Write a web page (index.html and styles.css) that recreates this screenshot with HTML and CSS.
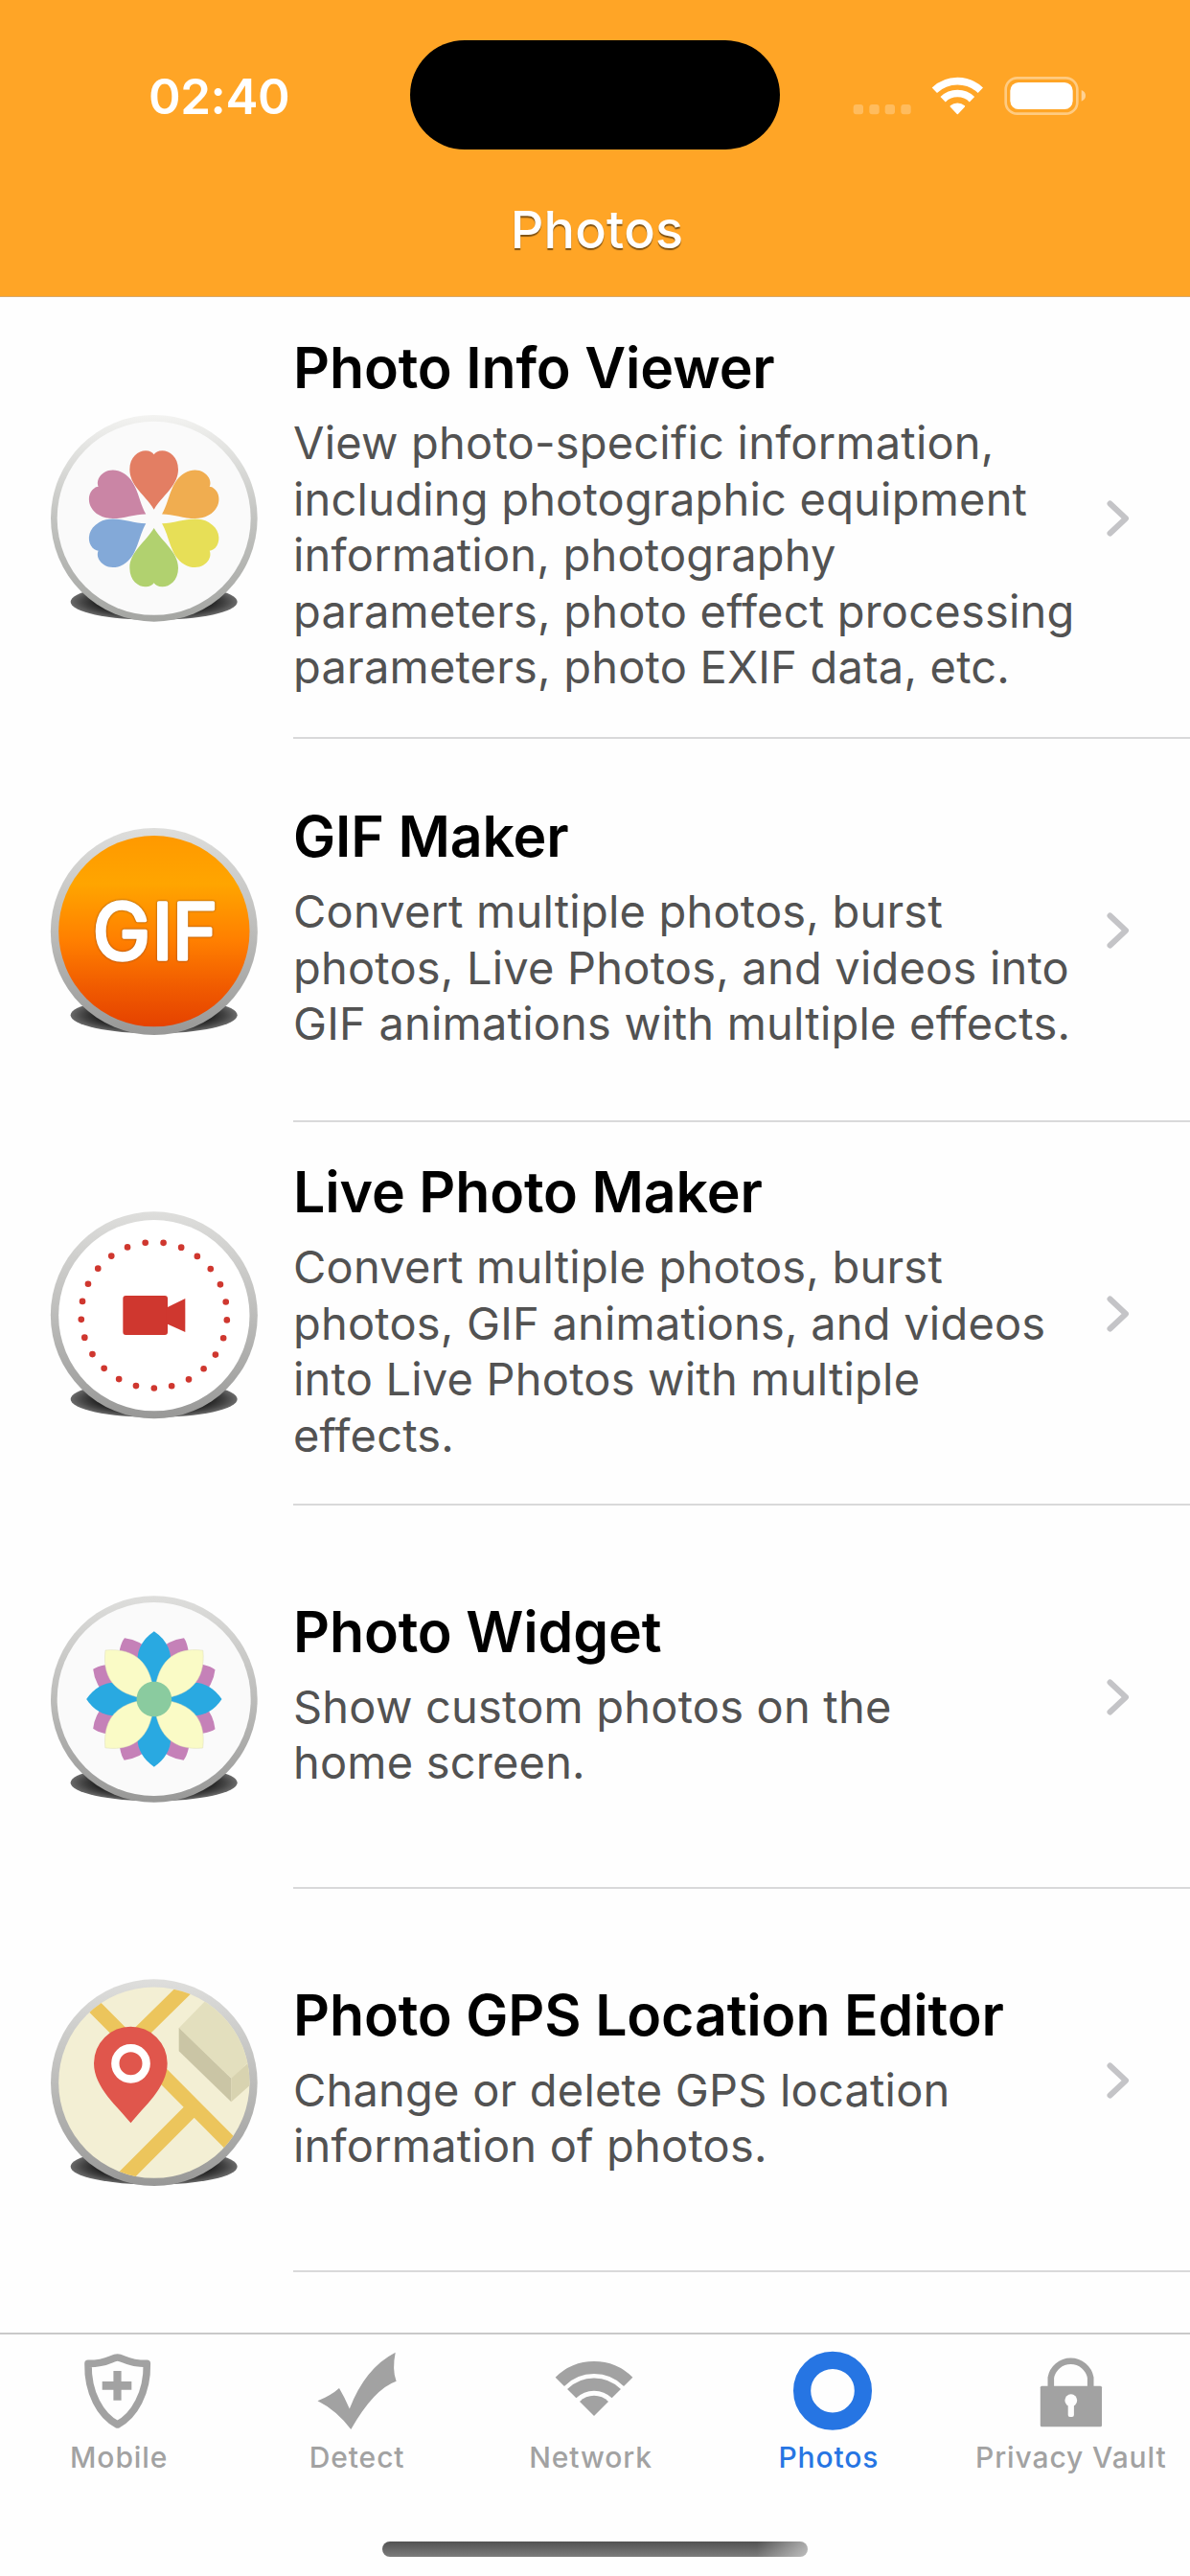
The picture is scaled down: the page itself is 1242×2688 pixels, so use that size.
FILE: index.html
```html
<!DOCTYPE html>
<html lang="en">
<head>
    <meta charset="UTF-8">
    <meta name="viewport" content="width=device-width, initial-scale=1.0">
    <title>Photos</title>
    <link rel="stylesheet" href="styles.css">
</head>
<body>
    <header class="header">
        <div class="status-bar">
            <span class="time">02:40</span>
            <div class="island"></div>
            <svg class="status-icons" viewBox="0 0 900 240" fill="#fff">
                <g opacity="0.26">
                    <rect x="92" y="147" width="31" height="31" rx="9"/>
                    <rect x="142" y="147" width="31" height="31" rx="9"/>
                    <rect x="191" y="147" width="31" height="31" rx="9"/>
                    <rect x="241" y="147" width="31" height="31" rx="9"/>
                </g>
                <path d="M346 103A104 104 0 0 1 490 103M372.500 131A65.500 65.500 0 0 1 463.500 131" fill="none" stroke="#fff" stroke-width="23"/>
                <path d="M418 175L397 153A32 32 0 0 1 439 153Z" stroke="#fff" stroke-width="5" stroke-linejoin="round"/>
                <rect x="569" y="64" width="224" height="112" rx="36" fill="none" stroke="#fff" stroke-width="8" opacity="0.42"/>
                <rect x="583" y="78" width="196" height="84" rx="26"/>
                <path d="M806 102Q819 107 819 119.500Q819 132 806 137Z" opacity="0.5"/>
            </svg>
        </div>
        <h1>Photos</h1>
    </header>

    <main class="list">
        <a class="row row-first">
            <svg class="row-icon" viewBox="0 0 780 780">
                <defs>
                    <linearGradient id="rim" x1="0" y1="0" x2="0" y2="1">
                        <stop offset="0" stop-color="#dededc"/>
                        <stop offset="0.5" stop-color="#bcbcba"/>
                        <stop offset="1" stop-color="#989897"/>
                    </linearGradient>
                    <linearGradient id="rimLight" x1="0" y1="0" x2="0" y2="1">
                        <stop offset="0" stop-color="#f3f3f1"/>
                        <stop offset="0.5" stop-color="#c2c3c0"/>
                        <stop offset="1" stop-color="#a4a5a2"/>
                    </linearGradient>
                    <radialGradient id="shade">
                        <stop offset="0.6" stop-color="#111"/>
                        <stop offset="0.85" stop-color="#444"/>
                        <stop offset="1" stop-color="#6a6a6a"/>
                    </radialGradient>
                    <path id="heart" d="M392 362C368 320 316 288 316 237C316 198 343 178 366 178C379 178 388 184 392 190C396 184 405 178 418 178C441 178 468 198 468 237C468 288 416 320 392 362Z"/>
                </defs>
                <ellipse cx="392" cy="651" rx="261" ry="57" fill="url(#shade)"/>
                <circle cx="392.500" cy="389.500" r="323.500" fill="url(#rimLight)"/>
                <circle cx="392" cy="389.500" r="303" fill="#fafafa"/>
                <use href="#heart" fill="#e37e63"/>
                <use href="#heart" fill="#f0ad50" transform="rotate(60 392 391)"/>
                <use href="#heart" fill="#e7df57" transform="rotate(120 392 391)"/>
                <use href="#heart" fill="#b1d16f" transform="rotate(180 392 391)"/>
                <use href="#heart" fill="#83a9d8" transform="rotate(240 392 391)"/>
                <use href="#heart" fill="#ca85a5" transform="rotate(300 392 391)"/>
            </svg>
            <div class="row-text">
                <h2>Photo Info Viewer</h2>
                <p>View photo-specific information,<br>including photographic equipment<br>information, photography<br>parameters, photo effect processing<br>parameters, photo EXIF data, etc.</p>
            </div>
            <svg class="chevron" viewBox="0 0 24 38"><path d="M3.500 3.500L20 19L3.500 34.500"/></svg>
        </a>

        <a class="row">
            <svg class="row-icon" viewBox="0 0 780 780">
                <defs>
                    <linearGradient id="gifFill" x1="0" y1="0" x2="0" y2="1">
                        <stop offset="0" stop-color="#ff9900"/>
                        <stop offset="0.25" stop-color="#ffa500"/>
                        <stop offset="0.55" stop-color="#ff7f00"/>
                        <stop offset="0.8" stop-color="#f05a00"/>
                        <stop offset="1" stop-color="#e54200"/>
                    </linearGradient>
                </defs>
                <ellipse cx="392" cy="655" rx="261" ry="57" fill="url(#shade)"/>
                <circle cx="392.500" cy="393" r="324" fill="url(#rim)"/>
                <circle cx="392.500" cy="392" r="299" fill="url(#gifFill)"/>
                <text class="gif-label" x="200 386 449" y="481">GIF</text>
            </svg>
            <div class="row-text">
                <h2>GIF Maker</h2>
                <p>Convert multiple photos, burst<br>photos, Live Photos, and videos into<br>GIF animations with multiple effects.</p>
            </div>
            <svg class="chevron" viewBox="0 0 24 38"><path d="M3.500 3.500L20 19L3.500 34.500"/></svg>
        </a>

        <a class="row">
            <svg class="row-icon" viewBox="0 0 780 780">
                <ellipse cx="392" cy="657" rx="261" ry="57" fill="url(#shade)"/>
                <circle cx="392.500" cy="394" r="324" fill="url(#rim)"/>
                <circle cx="392.500" cy="395" r="299" fill="#fff"/>
                <circle cx="392.500" cy="394" r="228.500" pathLength="25" transform="rotate(90 392.500 394)" fill="none" stroke="#cf372f" stroke-width="20" stroke-linecap="round" stroke-dasharray="0 1"/>
                <rect x="295" y="333" width="140" height="123" rx="9" fill="#cf372f"/>
                <path d="M430 371L490 342V447L430 420Z" fill="#cf372f"/>
            </svg>
            <div class="row-text">
                <h2>Live Photo Maker</h2>
                <p>Convert multiple photos, burst<br>photos, GIF animations, and videos<br>into Live Photos with multiple<br>effects.</p>
            </div>
            <svg class="chevron" viewBox="0 0 24 38"><path d="M3.500 3.500L20 19L3.500 34.500"/></svg>
        </a>

        <a class="row">
            <svg class="row-icon" viewBox="0 0 780 780">
                <defs>
                    <g id="petals">
                        <path d="M300 205Q350 210 392 255V396Q270 300 285 240Q290 218 300 205Z" fill="#c581b8"/>
                        <path d="M486 205Q436 210 392 255V396Q514 300 499 240Q495 218 486 205Z" fill="#c581b8"/>
                    </g>
                    <path id="bluePetal" d="M392.500 184C350 212 334 255 343 290Q360 330 392.500 396Q425 330 442 290C451 255 435 212 392.500 184Z" fill="#29a9e1"/>
                    <path id="creamPetal" d="M240 243C335 234 388 285 392.500 396C281 391 228 340 240 243Z" fill="#fafbc6" stroke="#dcdcb8" stroke-width="1.500"/>
                </defs>
                <ellipse cx="392" cy="658" rx="261" ry="57" fill="url(#shade)"/>
                <circle cx="392.500" cy="396" r="323.500" fill="url(#rim)"/>
                <circle cx="392" cy="396" r="303" fill="#fafafa"/>
                <use href="#petals"/>
                <use href="#petals" transform="rotate(90 392.500 396)"/>
                <use href="#petals" transform="rotate(180 392.500 396)"/>
                <use href="#petals" transform="rotate(270 392.500 396)"/>
                <use href="#bluePetal"/>
                <use href="#bluePetal" transform="rotate(90 392.500 396)"/>
                <use href="#bluePetal" transform="rotate(180 392.500 396)"/>
                <use href="#bluePetal" transform="rotate(270 392.500 396)"/>
                <use href="#creamPetal"/>
                <use href="#creamPetal" transform="rotate(90 392.500 396)"/>
                <use href="#creamPetal" transform="rotate(180 392.500 396)"/>
                <use href="#creamPetal" transform="rotate(270 392.500 396)"/>
                <circle cx="392.500" cy="396" r="55" fill="#8acb9f"/>
            </svg>
            <div class="row-text">
                <h2>Photo Widget</h2>
                <p>Show custom photos on the<br>home screen.</p>
            </div>
            <svg class="chevron" viewBox="0 0 24 38"><path d="M3.500 3.500L20 19L3.500 34.500"/></svg>
        </a>

        <a class="row">
            <svg class="row-icon" viewBox="0 0 780 780">
                <defs>
                    <clipPath id="mapClip"><circle cx="392.500" cy="396.500" r="299"/></clipPath>
                </defs>
                <ellipse cx="392" cy="659" rx="261" ry="57" fill="url(#shade)"/>
                <circle cx="392.500" cy="396.500" r="323.500" fill="url(#rim)"/>
                <g clip-path="url(#mapClip)">
                    <rect x="90" y="90" width="610" height="610" fill="#f3efd4"/>
                    <path d="M190 143L650 606M510 83L340 250M515 476L290 702" fill="none" stroke="#ecc55c" stroke-width="47"/>
                    <path d="M470 226L565 128L720 300L636 384Z" fill="#e3dfbe"/>
                    <path d="M470 225V298L634 457V383Z" fill="#cac5a5"/>
                    <path d="M634 383V457L720 380V305Z" fill="#d8d3b0"/>
                </g>
                <path d="M319.500 523C280 473 204 412 204 336A115 115 0 0 1 434 336C434 412 359 473 319.500 523Z" fill="#e0564c"/>
                <circle cx="319.500" cy="337" r="48.500" fill="none" stroke="#fff" stroke-width="25"/>
            </svg>
            <div class="row-text">
                <h2>Photo GPS Location Editor</h2>
                <p>Change or delete GPS location<br>information of photos.</p>
            </div>
            <svg class="chevron" viewBox="0 0 24 38"><path d="M3.500 3.500L20 19L3.500 34.500"/></svg>
        </a>
    </main>

    <footer class="footer">
        <nav class="tabs">
            <a class="tab">
                <svg viewBox="0 0 84 84">
                    <path d="M40.600 7C47 7 50 13.500 71.300 13.400C72 44 58 68 40.600 77C23 68 9.300 44 10 13.400C31 13.500 34 7 40.600 7Z" fill="none" stroke="currentColor" stroke-width="7.600" stroke-linejoin="round"/>
                    <path d="M36.400 21H44.600V32H55.300V40.700H44.600V51.700H36.400V40.700H24.700V32H36.400Z" fill="currentColor"/>
                </svg>
                <span>Mobile</span>
            </a>
            <a class="tab">
                <svg viewBox="0 0 84 84">
                    <path d="M81.700 1.700Q78 20 82.600 31.700Q59 40 35.300 82Q20 62 0.500 52.300Q14 47 23 39Q29 49 33.800 60.500Q50 18 81.700 1.700Z" fill="currentColor"/>
                </svg>
                <span>Detect</span>
            </a>
            <a class="tab tab-shift">
                <svg viewBox="0 0 84 84">
                    <path d="M5.300 32.300A50.500 50.500 0 0 1 76.700 32.300M17.700 44.700A33 33 0 0 1 64.300 44.700" fill="none" stroke="currentColor" stroke-width="13.200"/>
                    <path d="M41 68L26 53A21 21 0 0 1 56 53Z" fill="currentColor"/>
                </svg>
                <span>Network</span>
            </a>
            <a class="tab tab-shift active">
                <svg viewBox="0 0 84 84">
                    <circle cx="42" cy="41.700" r="31.900" fill="none" stroke="currentColor" stroke-width="18.200"/>
                </svg>
                <span>Photos</span>
            </a>
            <a class="tab">
                <svg viewBox="0 0 84 84">
                    <path d="M20.800 38V28A21 20.700 0 0 1 62.200 28V38" fill="none" stroke="currentColor" stroke-width="6.600"/>
                    <rect x="9.800" y="36.700" width="64.200" height="42.600" rx="1.500" fill="currentColor"/>
                    <circle cx="41.800" cy="51.700" r="6.400" fill="#fefefe"/>
                    <rect x="38.700" y="52" width="6.200" height="17" rx="2" fill="#fefefe"/>
                </svg>
                <span>Privacy Vault</span>
            </a>
        </nav>
        <div class="home-indicator"></div>
    </footer>
</body>
</html>
```
FILE: styles.css
```css
* {
    margin: 0;
    padding: 0;
    box-sizing: border-box;
}

body {
    display: flex;
    flex-direction: column;
    width: 1242px;
    height: 2688px;
    overflow: hidden;
    font-family: Inter, 'Liberation Sans', sans-serif;
    background: #fefefe;
}

svg {
    display: block;
    flex-shrink: 0;
}

/* Header */
.header {
    height: 310px;
    padding-top: 42px;
    background: #ffa526;
    border-bottom: 1px solid #d9a96a;
    color: #fff;
}

.status-bar {
    display: grid;
    grid-template-columns: 428px 386px 428px;
    align-items: center;
    height: 114px;
}

.time {
    margin-top: 3px;
    padding-left: 155px;
    font-size: 51px;
    font-weight: 600;
    line-height: 62px;
    letter-spacing: -0.4px;
}

.island {
    height: 114px;
    border-radius: 57px;
    background: #000;
}

.status-icons {
    width: 300px;
    height: 80px;
    margin: 2px 0 0 46px;
}

.header h1 {
    margin-top: 52px;
    padding-left: 4px;
    text-align: center;
    font-size: 54px;
    font-weight: 550;
    line-height: 64px;
    letter-spacing: 0.2px;
    text-shadow: 0 2px 1px rgba(0, 0, 0, 0.5);
}

/* List */
.list {
    flex: 1;
    min-height: 0;
    overflow: hidden;
}

.row {
    display: flex;
    align-items: center;
    height: 400px;
    padding-left: 30px;
    /* separator starts at the text column */
    background: linear-gradient(#d9d9da, #d9d9da) 306px 100% / 936px 2px no-repeat;
}

.row-first {
    height: 461px;
}

.row-icon {
    width: 260px;
    height: 260px;
}

.gif-label {
    font-family: Inter, sans-serif;
    font-size: 242px;
    font-weight: 400;
    fill: #fff;
    stroke: #fff;
    stroke-width: 11px;
    stroke-linejoin: round;
    filter: drop-shadow(0 0 3px rgba(110, 60, 20, 0.8));
}

.row-text {
    width: 849px;
    margin-left: 16px;
    padding-bottom: 7px;
    white-space: nowrap;
}

.row-text h2 {
    margin-bottom: 13px;
    font-size: 59px;
    font-weight: 600;
    line-height: 72px;
    letter-spacing: -0.15px;
    color: #000;
}

.row-text p {
    font-size: 47px;
    line-height: 58.5px;
    letter-spacing: 0.2px;
    color: #525252;
}

.chevron {
    width: 24px;
    height: 38px;
    fill: none;
    stroke: #c4c4c7;
    stroke-width: 6px;
    stroke-linecap: round;
    stroke-linejoin: round;
}

/* Tab bar */
.footer {
    height: 254px;
    border-top: 2px solid #c9c9c9;
}

.tabs {
    display: grid;
    grid-template-columns: repeat(5, 1fr);
    padding-top: 17px;
}

.tab {
    display: flex;
    flex-direction: column;
    align-items: center;
    gap: 9px;
    color: #a2a2a2;
}

.tab svg {
    width: 84px;
    height: 84px;
}

.tab span {
    font-size: 30px;
    font-weight: 500;
    line-height: 36px;
    letter-spacing: 0.9px;
    white-space: nowrap;
}

.tab-shift span {
    padding-right: 9px;
}

.tab.active {
    color: #2675e3;
}

.home-indicator {
    width: 444px;
    height: 16px;
    margin: 70px auto 0;
    border-radius: 8px;
    background: linear-gradient(90deg, rgba(255, 255, 255, 0) 88%, rgba(255, 255, 255, 0.5)), linear-gradient(#525252, #7c7c7c);
}
```
